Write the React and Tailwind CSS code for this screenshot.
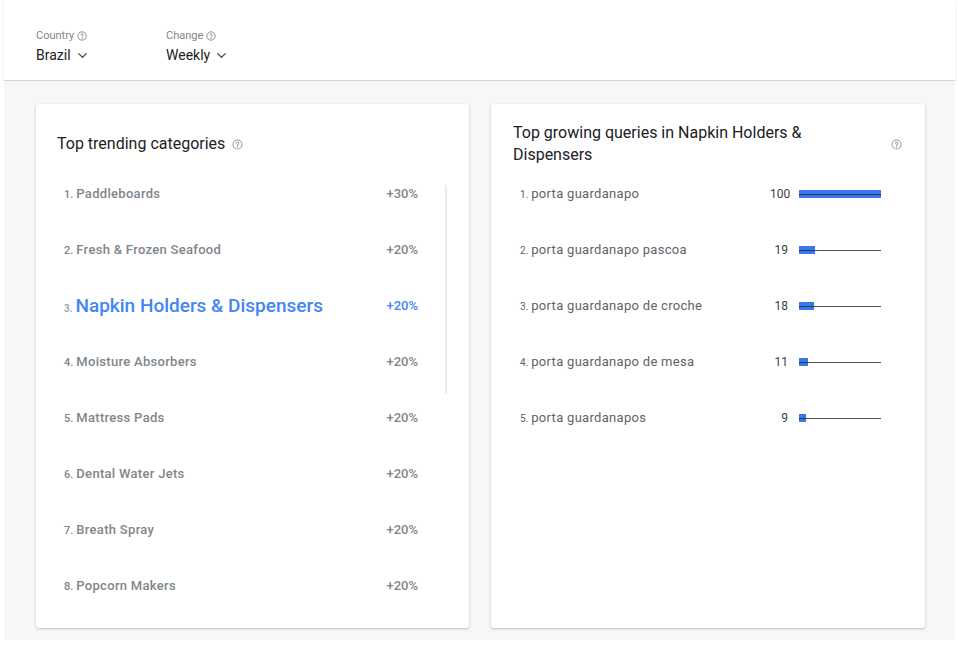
import React from "react";
import { ChevronDown } from "lucide-react";

const font = { fontFamily: "Roboto, 'Noto Sans', Arial, sans-serif" };

function HelpIcon({ size = 10, className = "" }) {
  return (
    <svg width={size} height={size} viewBox="0 0 24 24" className={className} fill="none" stroke="currentColor" strokeWidth="2.2">
      <circle cx="12" cy="12" r="10" />
      <path d="M9.1 9a3 3 0 0 1 5.8 1c0 2-3 2.5-3 4" strokeLinecap="round" />
      <circle cx="12" cy="17.5" r="0.6" fill="currentColor" />
    </svg>
  );
}

const categories = [
  { name: "Paddleboards", pct: "+30%" },
  { name: "Fresh & Frozen Seafood", pct: "+20%" },
  { name: "Napkin Holders & Dispensers", pct: "+20%", active: true },
  { name: "Moisture Absorbers", pct: "+20%" },
  { name: "Mattress Pads", pct: "+20%" },
  { name: "Dental Water Jets", pct: "+20%" },
  { name: "Breath Spray", pct: "+20%" },
  { name: "Popcorn Makers", pct: "+20%" },
];

const queries = [
  { q: "porta guardanapo", v: 100 },
  { q: "porta guardanapo pascoa", v: 19 },
  { q: "porta guardanapo de croche", v: 18 },
  { q: "porta guardanapo de mesa", v: 11 },
  { q: "porta guardanapos", v: 9 },
];

function Picker({ label, value }) {
  return (
    <div className="flex w-[130px] flex-col">
      <div className="flex items-center gap-[3px] text-[11px] leading-[14px] text-[#80868b]">
        <span>{label}</span>
        <HelpIcon size={10} className="text-[#80868b]" />
      </div>
      <div className="mt-[3px] flex items-center gap-[4px] text-[14px] leading-[18px] text-[#202124]">
        <span>{value}</span>
        <ChevronDown size={15} strokeWidth={2} className="text-[#3c4043]" />
      </div>
    </div>
  );
}

function Bar({ v }) {
  const w = Math.max(6, Math.round((v / 100) * 82));
  return (
    <div className="relative h-[8px] w-[82px]">
      <div className="absolute left-0 right-0 top-[3.5px] h-[1px] bg-[#555]" />
      <div className="absolute left-0 top-0 h-[8px] bg-[#3b78e7]" style={{ width: w }} />
      <div className="absolute left-0 top-[3.5px] h-[1px] bg-[#1f3a6b]" style={{ width: w }} />
    </div>
  );
}

export default function App() {
  return (
    <div className="min-h-[661px] bg-white" style={font}>
      <div className="mx-[4px]">
        <header className="flex h-[81px] items-start border-b border-[#d6d6d6] bg-white pl-[32px] pt-[29px] shadow-[0_1px_3px_rgba(0,0,0,0.1)]">
          <Picker label="Country" value="Brazil" />
          <Picker label="Change" value="Weekly" />
        </header>
        <main className="flex gap-[22px] bg-[#f7f7f7] pb-[12px] pl-[32px] pr-[30px] pt-[23px]">
          {/* trending categories */}
          <section className="h-[524px] w-[433px] rounded-[3px] bg-white shadow-[0_1px_3px_rgba(0,0,0,0.22)]">
            <div className="box-content flex h-[44px] items-center pl-[21px] pt-[18px]">
              <h2 className="text-[16px] font-normal leading-[22px] text-[#202124]">Top trending categories</h2>
              <HelpIcon size={11} className="ml-[7px] text-[#9aa0a6]" />
            </div>
            <div className="relative ml-[21px] mr-[21px]">
              <div className="absolute right-[1px] top-[19px] h-[209px] w-[2px] bg-[#ececec]" />
              {categories.map((c, i) => (
                <div key={c.name} className="flex h-[56px] items-center justify-between pl-[7px] pr-[30px]">
                  <div className={c.active ? "flex items-baseline text-[#4285f4]" : "flex items-baseline text-[#80868b]"}>
                    <span className={c.active ? "mr-[3px] text-[10px] font-medium text-[#9aa0a6]" : "mr-[3px] text-[11px] font-medium"}>{i + 1}.</span>
                    <span className={c.active ? "text-[19px] font-medium leading-[24px]" : "text-[13px] font-medium leading-[18px] tracking-[0.3px]"}>{c.name}</span>
                  </div>
                  <span className={c.active ? "text-[13px] font-medium text-[#4285f4]" : "text-[13px] font-medium text-[#80868b]"}>{c.pct}</span>
                </div>
              ))}
            </div>
          </section>
          {/* growing queries */}
          <section className="h-[524px] w-[434px] rounded-[3px] bg-white shadow-[0_1px_3px_rgba(0,0,0,0.22)]">
            <div className="box-content flex h-[44px] items-center justify-between pl-[22px] pr-[23px] pt-[18px]">
              <h2 className="w-[310px] text-[16px] font-normal leading-[22px] text-[#202124]">Top growing queries in Napkin Holders &amp; Dispensers</h2>
              <HelpIcon size={11} className="text-[#9aa0a6]" />
            </div>
            <div className="pl-[29px]">
              {queries.map((r, i) => (
                <div key={r.q} className="flex h-[56px] items-center">
                  <div className="flex w-[250px] items-baseline text-[#5f6368]">
                    <span className="mr-[3px] text-[10px]">{i + 1}.</span>
                    <span className="text-[13px] tracking-[0.3px]">{r.q}</span>
                  </div>
                  <span className="w-[18px] text-right text-[12px] text-[#3c4043]">{r.v}</span>
                  <div className="ml-[11px]">
                    <Bar v={r.v} />
                  </div>
                </div>
              ))}
            </div>
          </section>
        </main>
      </div>
    </div>
  );
}
